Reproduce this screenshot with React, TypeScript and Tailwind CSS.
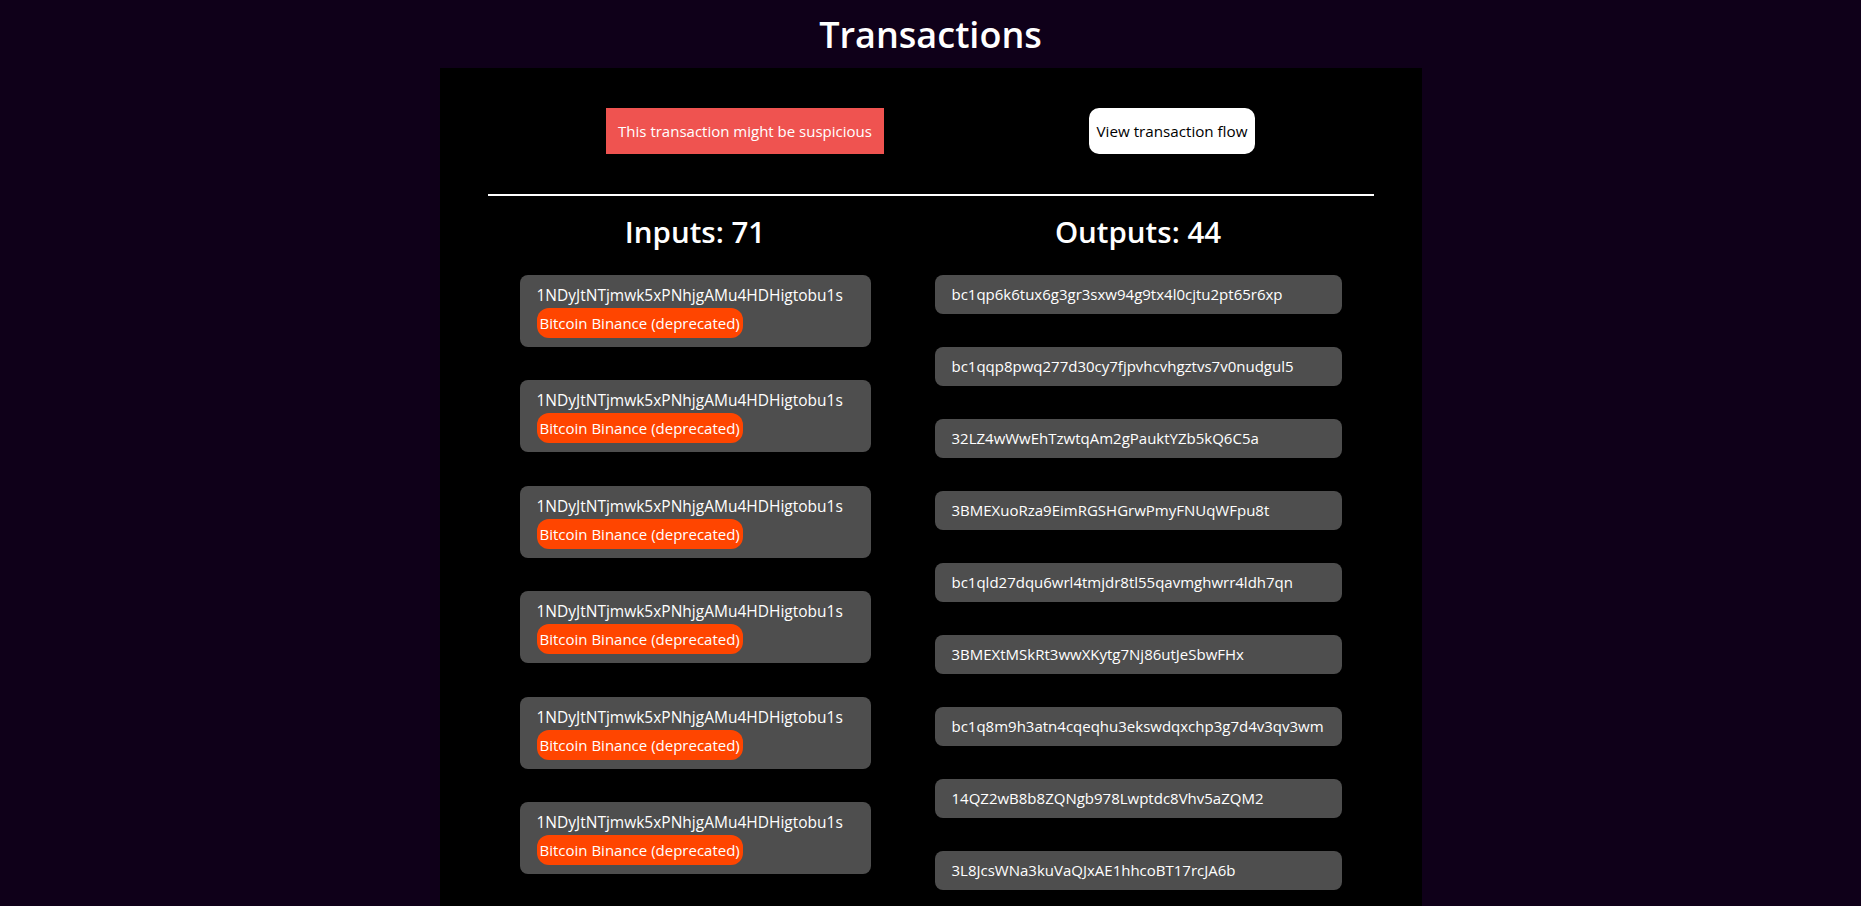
import React from 'react';

const inputs = Array.from({ length: 6 }, () => ({
  address: '1NDyJtNTjmwk5xPNhjgAMu4HDHigtobu1s',
  label: 'Bitcoin Binance (deprecated)',
}));

const outputs = [
  'bc1qp6k6tux6g3gr3sxw94g9tx4l0cjtu2pt65r6xp',
  'bc1qqp8pwq277d30cy7fjpvhcvhgztvs7v0nudgul5',
  '32LZ4wWwEhTzwtqAm2gPauktYZb5kQ6C5a',
  '3BMEXuoRza9EimRGSHGrwPmyFNUqWFpu8t',
  'bc1qld27dqu6wrl4tmjdr8tl55qavmghwrr4ldh7qn',
  '3BMEXtMSkRt3wwXKytg7Nj86utJeSbwFHx',
  'bc1q8m9h3atn4cqeqhu3ekswdqxchp3g7d4v3qv3wm',
  '14QZ2wB8b8ZQNgb978Lwptdc8Vhv5aZQM2',
  '3L8JcsWNa3kuVaQJxAE1hhcoBT17rcJA6b',
];

export default function App() {
  return (
    <div className="min-h-screen bg-[#0f0019] font-['Open_Sans',sans-serif] text-white">
      {/* TITLE */}
      <h1 className="h-[68px] pt-[2px] flex items-center justify-center text-[36px] font-semibold leading-none">
        Transactions
      </h1>

      {/* PANEL */}
      <div className="w-[982px] mx-auto bg-black px-[48px] pt-[40px] min-h-[838px]">
        <div className="flex justify-center gap-[205px]">
          <div className="w-[278px] h-[46px] bg-[#ef5350] flex items-center justify-center text-[15px]">
            This transaction might be suspicious
          </div>
          <button className="w-[166px] h-[46px] bg-white text-black rounded-[10px] flex items-center justify-center text-[15.2px]">
            View transaction flow
          </button>
        </div>

        <div className="mt-[40px] h-[2px] bg-white" />

        <div className="flex justify-around pt-[14px]">
          {/* Inputs */}
          <div className="w-[351px] flex flex-col">
            <h2 className="text-[29.5px] font-semibold text-center leading-[44px]">Inputs: 71</h2>
            <div className="mt-[21px] flex flex-col gap-[33.4px]">
              {inputs.map((item, idx) => (
                <div key={idx} className="bg-[#4e4e4e] rounded-[8px] h-[72px] px-[17px] pt-[9px]">
                  <div className="leading-[22px] text-[15.5px]">{item.address}</div>
                  <span className="inline-block mt-[2px] bg-[#ff4500] rounded-[12px] px-[3px] h-[30px] leading-[30px] text-[15px]">
                    {item.label}
                  </span>
                </div>
              ))}
            </div>
          </div>

          {/* Outputs */}
          <div className="w-[407px] flex flex-col">
            <h2 className="text-[29.5px] font-semibold text-center leading-[44px]">Outputs: 44</h2>
            <div className="mt-[21px] flex flex-col gap-[33px]">
              {outputs.map((addr) => (
                <div key={addr} className="bg-[#4e4e4e] rounded-[8px] h-[39px] px-[17px] flex items-center text-[15px]">
                  {addr}
                </div>
              ))}
            </div>
          </div>
        </div>
      </div>
    </div>
  );
}
